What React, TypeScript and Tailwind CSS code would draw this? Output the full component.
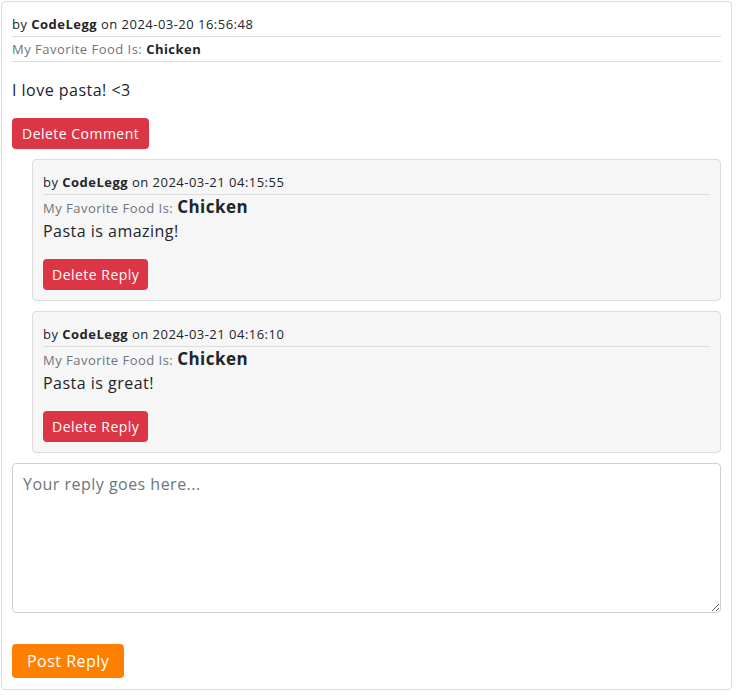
import React from 'react';

interface Reply {
  id: number;
  author: string;
  date: string;
  food: string;
  text: string;
}

const replies: Reply[] = [
  {id: 1, author: 'CodeLegg', date: '2024-03-21 04:15:55', food: 'Chicken', text: 'Pasta is amazing!'},
  {id: 2, author: 'CodeLegg', date: '2024-03-21 04:16:10', food: 'Chicken', text: 'Pasta is great!'},
];

const font = {fontFamily: '"Open Sans", "Noto Sans", sans-serif'};

const ReplyCard = ( {reply}: {reply: Reply} ) => (
  <div className="ml-5 mt-[10px] rounded border border-[#dcdcdc] bg-[#f6f6f6] p-[10px]">
    <div className="border-b border-[#dcdcdc] text-[13px] leading-6 text-[#212529]">
      by <b>{reply.author}</b> on {reply.date}
    </div>
    <div className="h-6 text-[13px] leading-6 text-[#6c757d]">
      My Favorite Food Is: <b className="text-[17px] text-[#212529]">{reply.food}</b>
    </div>
    <p className="text-[16px] leading-6 text-[#212529]">{reply.text}</p>
    <button className="mt-4 h-[31px] rounded bg-[#dc3545] px-[9px] text-[14px] text-white">Delete Reply</button>
  </div>
);

export default function App() {
  return (
    <div style={font} className="m-[1px] w-[731px] rounded border border-[#dcdcdc] bg-white px-[10px] pt-[10px] pb-[11px] tracking-[0.03em]">
      <div className="border-b border-[#dcdcdc] text-[13px] leading-6 text-[#212529]">
        by <b>CodeLegg</b> on 2024-03-20 16:56:48
      </div>
      <div className="h-[25px] border-b border-[#dcdcdc] text-[13px] leading-6 text-[#6c757d]">
        My Favorite Food Is: <b className="text-[#212529]">Chicken</b>
      </div>
      <p className="mt-4 text-[16px] leading-6 text-[#212529]">I love pasta! &lt;3</p>
      <button className="mt-4 h-[31px] rounded bg-[#dc3545] px-[10px] text-[14px] text-white">Delete Comment</button>
      {replies.map( r => <ReplyCard key={r.id} reply={r} /> )}
      <textarea
        placeholder="Your reply goes here..."
        className="mt-[10px] block h-[150px] w-full rounded border border-[#cfcfcf] px-[10px] py-[8px] text-[16px] text-[#212529] placeholder:text-[#6c757d] outline-none"
      />
      <button className="mt-[31px] h-[34px] rounded bg-[#ff8000] px-[15px] text-[16px] text-white">Post Reply</button>
    </div>
  );
}
